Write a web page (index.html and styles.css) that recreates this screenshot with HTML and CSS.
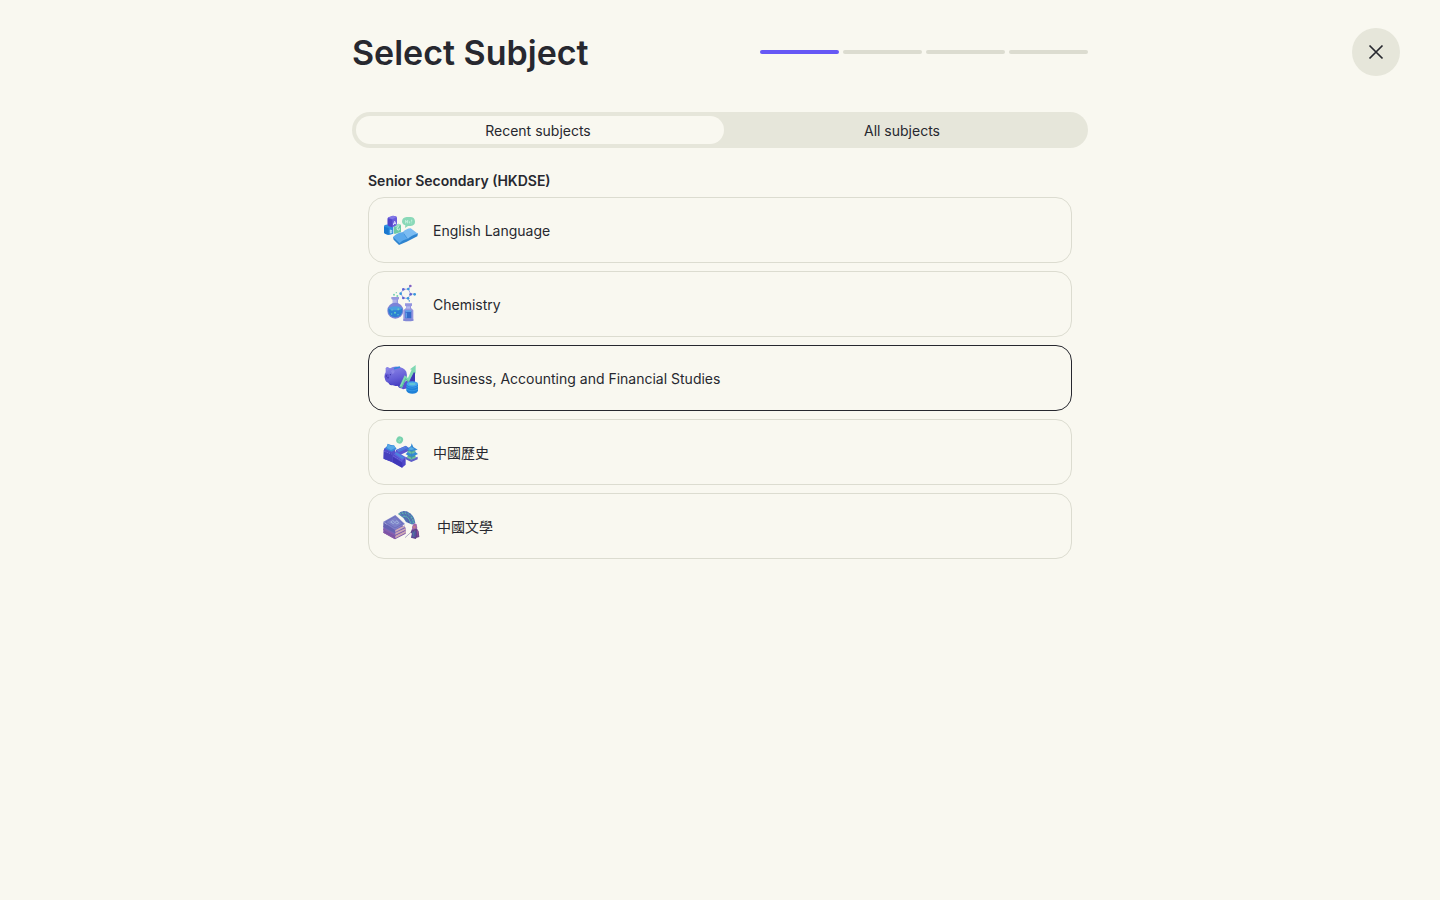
FILE: index.html
```
<!DOCTYPE html>
<html lang="en">
<head>
    <meta charset="UTF-8">
    <meta name="viewport" content="width=device-width, initial-scale=1.0">
    <title>Select Subject</title>
    <link rel="stylesheet" href="styles.css">
</head>
<body>
    <header class="header">
        <div class="header-main">
            <h1>Select Subject</h1>
            <div class="steps" role="img" aria-label="Step 1 of 4">
                <span class="step done"></span>
                <span class="step"></span>
                <span class="step"></span>
                <span class="step"></span>
            </div>
        </div>
        <button type="button" class="close" aria-label="Close">
            <svg viewBox="0 0 24 24" width="24" height="24"><path d="M5.5 5.5l13 13M18.5 5.5l-13 13"/></svg>
        </button>
    </header>
    <main class="content">
        <div class="tabs" role="tablist">
            <button type="button" class="tab active" role="tab" aria-selected="true">Recent subjects</button>
            <button type="button" class="tab" role="tab" aria-selected="false">All subjects</button>
        </div>
        <section class="subjects">
            <h2>Senior Secondary (HKDSE)</h2>

            <button type="button" class="subject">
                <!-- letter blocks, speech bubble and book -->
                <svg class="icon" viewBox="15 12 120 120">
                    <path fill="#2f8fe0" d="M24 61q0-3 3-4l10-2 15 5v23l-13 4q-12-3-15-7z"/>
                    <path fill="#1b78cf" d="M24 62l14 4v21q-12-3-14-6z"/>
                    <path fill="#6cc9a5" d="M54 60l13-7 8 4v21l-19 6-2-2z"/>
                    <path fill="#9be0c6" d="M54 60l13-7 8 4-15 7z"/>
                    <path fill="#6a5cdb" d="M35 38q0-4 4-5l12-4 8 2q4 1 4 5v17q0 4-4 6l-10 5-11-4q-3-1-3-5z"/>
                    <path fill="#8378e8" d="M37 35l14-6 11 4-13 7z"/>
                    <path fill="#5145c8" d="M35 37l14 4v23l-11-4q-3-1-3-5z"/>
                    <path fill="none" stroke="#dcdbfd" stroke-width="3" d="M52 57l4-11 4 9M53 53l6-1"/>
                    <path fill="none" stroke="#b9e0f8" stroke-width="3" d="M43 72v9q6 0 4-4 3-4-4-5z"/>
                    <path fill="none" stroke="#d4f4e7" stroke-width="3" d="M69 62q-7 0-6 7 2 6 7 2v-4"/>
                    <path fill="#8ad9b8" d="M92 33h11q13 0 14 13t-13 14H96l-9 6 1-8q-10-3-10-12 1-12 14-13z"/>
                    <path fill="none" stroke="#c3eedc" stroke-width="3" d="M89 42v10m6-10v10m-6-5h6m6-1v6m6-11v6m0 3v2"/>
                    <path fill="#2f84cf" d="M51 94l2 7 16 16 23-10 32-16 2-9-44 2z"/>
                    <path fill="#5ba9ec" d="M51 93q13-14 29-14l15 20q-14 1-24 13z"/>
                    <path fill="#7bbcf2" d="M80 79q10-11 24-12l22 16q-20 4-31 16z"/>
                    <path fill="none" stroke="#3d8fd8" stroke-width="2" d="M80 78l15 21"/>
                </svg>
                <span>English Language</span>
            </button>

            <button type="button" class="subject">
                <!-- flask, jar and molecule -->
                <svg class="icon" viewBox="15 12 120 120">
                    <path fill="none" stroke="#a3aae6" stroke-width="3" d="M82 28l15-1 7 15-8 13-14-1-8-14zM97 27l6-9M104 42h12M96 55l4 8"/>
                    <g fill="#5f63d2"><circle cx="82" cy="28" r="4"/><circle cx="104" cy="43" r="4"/><circle cx="82" cy="54" r="4"/><circle cx="103" cy="18" r="4" fill="#8060c4"/></g>
                    <g fill="#3999dc"><circle cx="97" cy="27" r="4"/><circle cx="96" cy="55" r="4"/><circle cx="74" cy="41" r="4"/><circle cx="116" cy="43" r="4"/><circle cx="100" cy="63" r="2"/></g>
                    <g fill="#76d1b0"><circle cx="61" cy="38" r="2"/><circle cx="54" cy="44" r="3"/><circle cx="64" cy="48" r="3"/><circle cx="59" cy="54" r="3"/></g>
                    <path fill="#9698de" d="M46 51h23v6l-3 2v14H50V59l-4-2z"/>
                    <path fill="#b1b4ea" d="M51 59h11v14H51z"/>
                    <circle cx="58" cy="92" r="24" fill="#7b83d8"/>
                    <path fill="#2b7fd3" d="M37 86q16-10 42 0 3 22-21 26-23-3-21-26z"/>
                    <ellipse cx="58" cy="85" rx="20" ry="6" fill="#4b9fdf"/>
                    <g fill="#63cfc0"><circle cx="48" cy="90" r="2"/><circle cx="57" cy="98" r="3"/><circle cx="67" cy="88" r="3"/><circle cx="66" cy="104" r="2"/><circle cx="47" cy="102" r="2"/></g>
                    <path fill="#9495df" d="M87 70h21v7l-3 2v5l7 7v31H82V91l8-7v-5l-3-2z"/>
                    <path fill="#b4b9ee" d="M91 79h11v7H91z"/>
                    <path fill="#3469ca" d="M88 93h18v22H88z"/>
                    <path fill="#5d9ee6" d="M88 91h18v5H88zM89 98h4v15h-4z"/>
                    <ellipse cx="97" cy="120" rx="16" ry="4" fill="#8288d6"/>
                </svg>
                <span>Chemistry</span>
            </button>

            <button type="button" class="subject selected">
                <!-- piggy bank, arrow and coins -->
                <svg class="icon" viewBox="15 12 120 120">
                    <defs>
                        <linearGradient id="pig" x1="0.3" y1="0" x2="0.6" y2="1">
                            <stop stop-color="#8a84e6"/>
                            <stop offset="0.6" stop-color="#655ed6"/>
                            <stop offset="1" stop-color="#453cbf"/>
                        </linearGradient>
                    </defs>
                    <path fill="#4a41c2" d="M34 78l5 12q5 5 11 3l6-8zM60 88l8 12q6 5 12 1l8-18z"/>
                    <path fill="url(#pig)" d="M29 47q-1-8 6-8l7 4q9-6 22-5 20 1 27 15 5 18-6 32-11 13-27 11-11-2-17-8-14-2-15-18-2-10 3-15z"/>
                    <path fill="#8a84e6" d="M29 43q3-4 11 1l-7 8zM45 52q5-7 11-1 0 8-7 9z"/>
                    <ellipse cx="33" cy="68" rx="7" ry="9" fill="#6056d0"/>
                    <circle cx="31" cy="66" r="2" fill="#352ea2"/>
                    <circle cx="36" cy="71" r="2" fill="#352ea2"/>
                    <circle cx="43" cy="62" r="2" fill="#352ea2"/>
                    <path stroke="#2f86dc" stroke-width="5" d="M54 44l18-5"/>
                    <path fill="#5a4ed2" d="M72 100l12-15 16-10 14-30 3 3v50l-36 8z"/>
                    <path fill="#4037b6" d="M103 75l11-25 3-2v40l-14 8z"/>
                    <path fill="#7fd8b3" d="M70 98l16-34 10 8 11-25-5-1 17-13v26l-5-5-16 31-9-8-11 24z"/>
                    <path fill="#58bf9b" d="M70 98l8 3 11-24 9 8 3-6-4 1-9-8-11 24z"/>
                    <path fill="#1f81d8" d="M91 90q17-8 35 0v20q-3 9-17 9t-18-9z"/>
                    <ellipse cx="109" cy="90" rx="17" ry="8" fill="#45a4ec"/>
                    <ellipse cx="109" cy="90" rx="10" ry="4" fill="#63c5d7"/>
                    <path fill="none" stroke="#3f9ee8" stroke-width="2" d="M91 97q17 11 35 0M91 105q17 11 35 0"/>
                </svg>
                <span>Business, Accounting and Financial Studies</span>
            </button>

            <button type="button" class="subject">
                <!-- great wall, coin and pagoda -->
                <svg class="icon" viewBox="15 12 120 120">
                    <ellipse cx="71" cy="36" rx="10" ry="11" fill="#78d2ae" transform="rotate(25 71 36)"/>
                    <path fill="none" stroke="#a5e5c8" stroke-width="2" d="M68 38l5-6 1 5-5 4z"/>
                    <path fill="#5a55d0" d="M60 66l29-12 10 6v8L66 84l-8-6z"/>
                    <path fill="#4a7fdc" d="M62 65l27-12 9 6-30 14z"/>
                    <path fill="#4f47c9" d="M23 66l28 8 38 16v20l-11 9-30-16-25-11z"/>
                    <path fill="#4038b8" d="M50 86l29 18v15L50 103z"/>
                    <path fill="#5d62dc" d="M50 77l12-6 28 17-11 10z"/>
                    <path fill="#4a86dd" d="M55 76l6-3 24 15-6 5z"/>
                    <path fill="#5550cd" d="M24 62l8-6 24 4 3 14-9 8v20l-27-10z"/>
                    <path fill="#4741be" d="M24 68l25 8v25l-26-9z"/>
                    <path fill="#3a88dc" d="M27 62l6-8 2-7 10 4 9 1 8 11-15 8z"/>
                    <path fill="#57a8e6" d="M35 48l10 6 8-3 6 8-14 7-12-6z"/>
                    <path fill="none" stroke="#7a74e6" stroke-width="3" stroke-dasharray="4 3" d="M25 70l22 8M52 84l26 16M64 68l26-12"/>
                    <path fill="#4a9d8b" d="M95 67h23v28l-12 4-11-5z"/>
                    <path fill="#5f5fca" d="M88 86l19 6 18-6v8l-19 8-17-8z"/>
                    <path fill="#3389d6" d="M107 46l-2 8-14 11 15 5 19-5-13-8zM89 79l7-8h21l9 7-19 9z"/>
                    <path fill="#6cbf9e" d="M97 68l10 4 9-3v6l-10 3-9-4zM94 84l12 5 13-4v5l-13 5-12-5z"/>
                    <path fill="#5dafe1" d="M105 57l-8 7 9 2 10-3z"/>
                    <path stroke="#3f87a8" stroke-width="2" d="M107 73v20"/>
                </svg>
                <span lang="zh-Hant">中國歷史</span>
            </button>

            <button type="button" class="subject">
                <!-- books, fan and figure -->
                <svg class="icon" viewBox="15 12 120 120">
                    <path fill="#4f7db8" d="M66 36q11-13 29-7 21 10 23 34-4 5-12 4l-16-7-8-12z"/>
                    <path fill="none" stroke="#5cb8a6" stroke-width="4" stroke-dasharray="5 3" d="M69 36q35-11 44 27"/>
                    <path fill="none" stroke="#5759a8" stroke-width="2" d="M73 31l25 31M82 27l17 35M92 28l8 34M102 34l-1 29M112 48L98 61"/>
                    <path fill="none" stroke="#5bb5aa" stroke-width="3" d="M80 43q18-4 24 21"/>
                    <path fill="#7a54a8" d="M22 82l37-21 30 24v10l-32 17-35-20z"/>
                    <path fill="#cfaab4" d="M58 101l31-15v6l-31 17z"/>
                    <path fill="#7a64b8" d="M22 72l38-17 29 22v7l-32 17-35-18z"/>
                    <path fill="#cfaab4" d="M58 92l31-14v5L58 98z"/>
                    <path fill="#6463b2" d="M22 61l35 24v8L22 75z"/>
                    <path fill="#cfaeb8" d="M58 84l29-14v5L58 90z"/>
                    <path fill="#7d80c8" d="M21 60l37-21 29 27-30 17z"/>
                    <path fill="none" stroke="#6366b4" stroke-width="2" d="M29 60l28-16 23 21-23 13z"/>
                    <path fill="none" stroke="#9fb2dc" stroke-width="3" d="M44 60q6-7 10-2 5 4-2 7zm13 1l6-5 5 7-6 3z"/>
                    <path fill="none" stroke="#8f5aa5" stroke-width="3" d="M22 81l35 19M22 91l35 19"/>
                    <path stroke="#8d88b4" stroke-width="2" d="M87 107l20-18"/>
                    <path fill="#60408a" d="M108 81l12-5 8 12 2 17-8 2-3 4-14-4 3-12-4-4z"/>
                    <path fill="#a368aa" d="M111 68q5-6 11-1l2 12-15 5-1-9z"/>
                    <circle cx="115" cy="75" r="4" fill="#c07f88"/>
                    <path fill="#5650a0" d="M108 86l7 4 7-4-3 19-12 3z"/>
                    <path fill="none" stroke="#4a8c9c" stroke-width="2" d="M117 85l-5 11 2 9M109 92l6 4"/>
                    <path fill="none" stroke="#925098" stroke-width="3" d="M124 84l2 20"/>
                </svg>
                <span lang="zh-Hant">&nbsp;中國文學</span>
            </button>
        </section>
    </main>
</body>
</html>
```
FILE: styles.css
```
* {
    box-sizing: border-box;
}
body {
    margin: 0;
    min-height: 100vh;
    background: #f9f8f0;
    color: #27282f;
    font-family: Inter, "Noto Sans CJK TC", sans-serif;
    font-size: 14px;
    line-height: 20px;
}
button {
    padding: 0;
    border: none;
    background: none;
    color: inherit;
    font: inherit;
    cursor: pointer;
}
.header {
    display: grid;
    grid-template-columns: 1fr minmax(0, 736px) 1fr;
    align-items: center;
    padding: 28px 40px;
}
.header-main {
    grid-column: 2;
    display: grid;
    grid-template-columns: 1fr 328px;
    gap: 16px;
    align-items: center;
}
h1 {
    margin: 0;
    padding-top: 2px;
    font-size: 34px;
    line-height: 46px;
    font-weight: 600;
}
.steps {
    display: flex;
    gap: 4px;
}
.step {
    flex: 1;
    height: 4px;
    border-radius: 2px;
    background: #dcdcd0;
}
.step.done {
    background: #6658f5;
}
.close {
    justify-self: end;
    display: flex;
    align-items: center;
    justify-content: center;
    width: 48px;
    height: 48px;
    border-radius: 50%;
    background: #e6e6da;
}
.close svg {
    fill: none;
    stroke: #27282f;
    stroke-width: 1.7;
}
.content {
    max-width: 736px;
    margin: 8px auto 0;
}
.tabs {
    display: grid;
    grid-template-columns: 1fr 1fr;
    padding: 4px;
    border-radius: 18px;
    background: #e6e6da;
}
.tab {
    height: 28px;
    padding-top: 2px;
    border-radius: 14px;
}
.tab.active {
    margin-right: -4px;
    padding-right: 4px;
    background: #f9f8f0;
}
.subjects {
    display: flex;
    flex-direction: column;
    gap: 8px;
    padding: 20px 16px;
}
h2 {
    margin: 0 0 -4px;
    font-size: 14px;
    line-height: 25px;
    font-weight: 600;
}
.subject {
    display: flex;
    align-items: center;
    gap: 12px;
    height: 66px;
    padding: 0 12px;
    border: 1px solid #dcdcd0;
    border-radius: 16px;
    text-align: left;
}
.subject.selected {
    border-color: #27282f;
}
.subject span {
    padding-top: 2px;
}
.icon {
    flex: none;
    width: 40px;
    height: 40px;
}
```
